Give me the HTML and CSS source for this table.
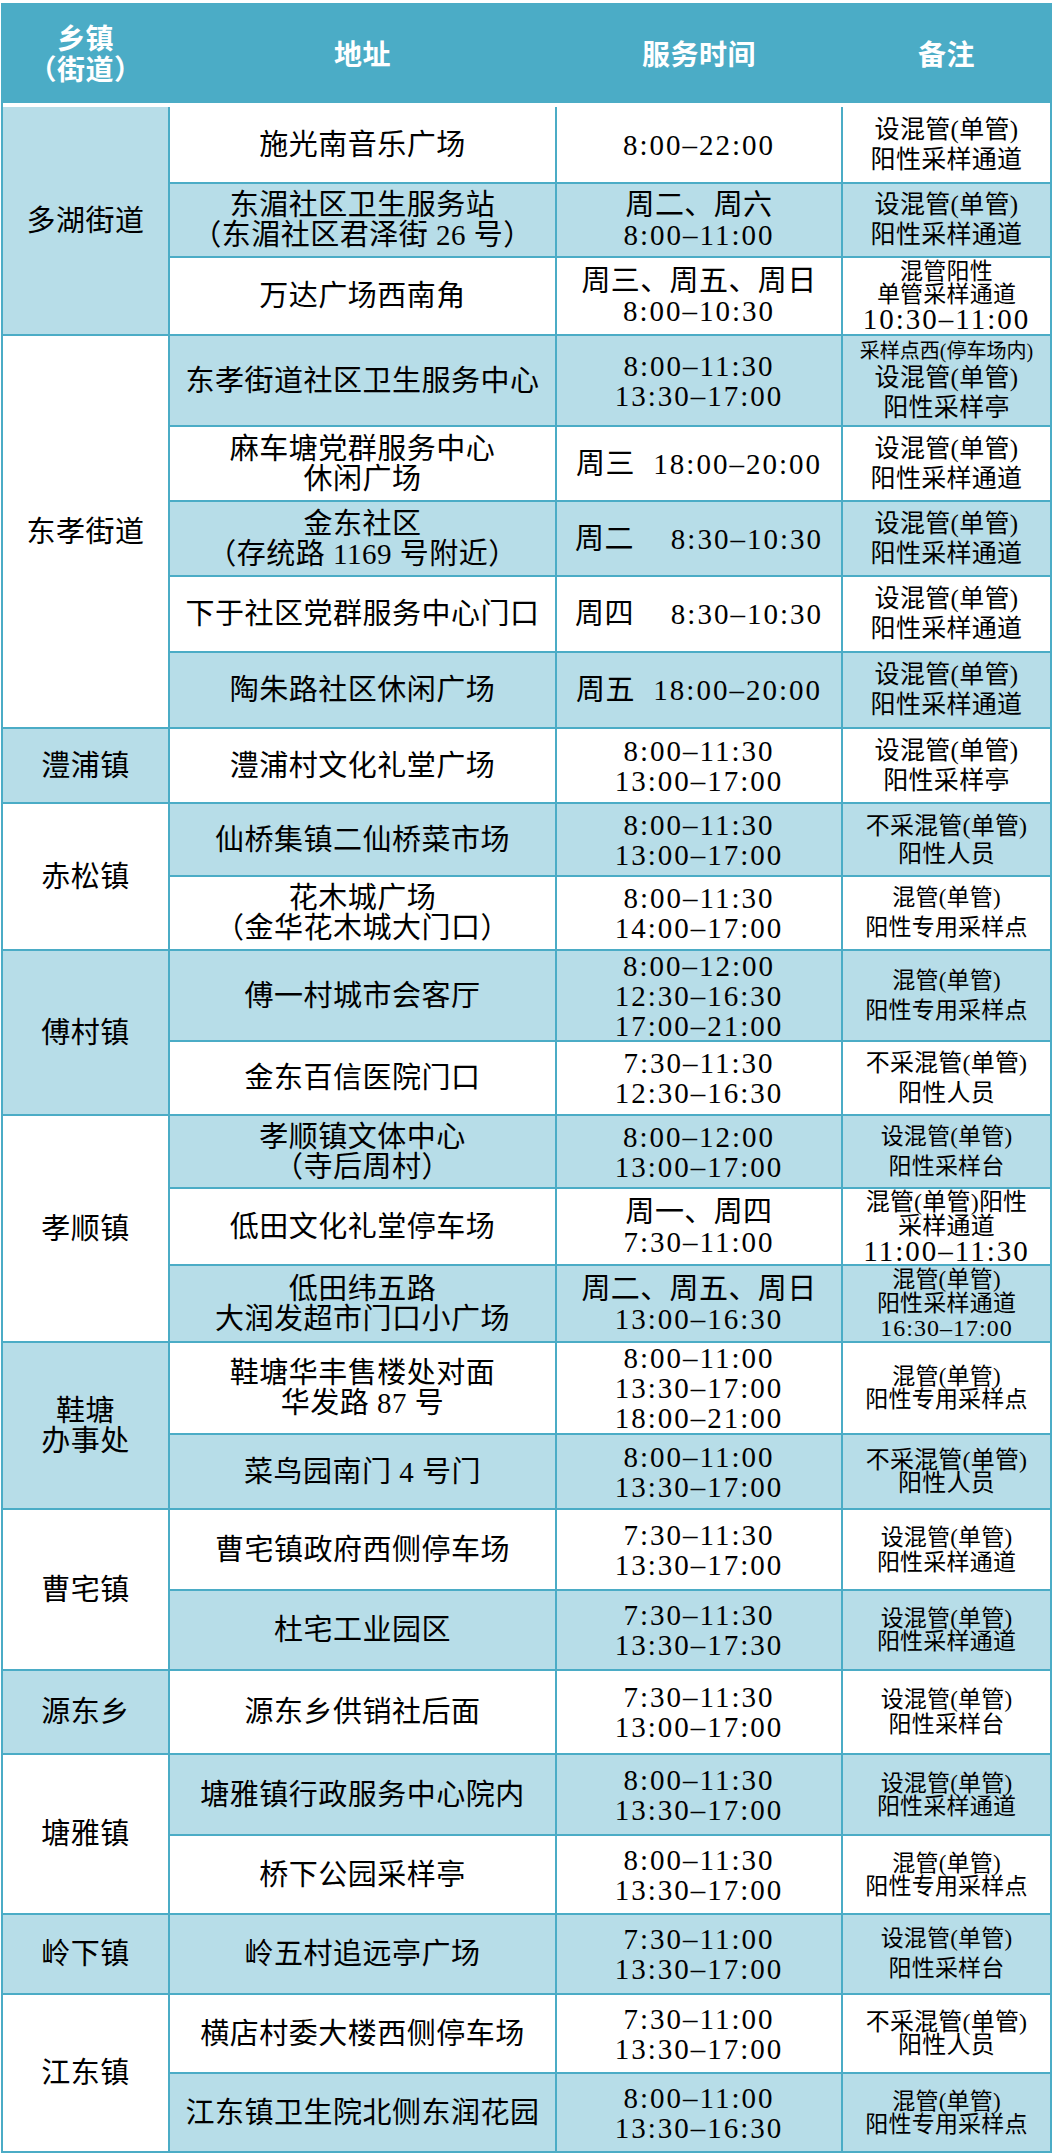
FILE: index.html
```html
<!DOCTYPE html>
<html lang="zh-CN">
<head>
<meta charset="utf-8">
<title>核酸采样点</title>
<link rel="stylesheet" href="styles.css">
</head>
<body>
<div class="sheet">
  <div class="cols head">
    <div class="hc"><div>乡镇<br>（街道）</div></div>
    <div class="hc"><div>地址</div></div>
    <div class="hc"><div>服务时间</div></div>
    <div class="hc"><div>备注</div></div>
  </div>
  <div class="spacer"></div>
  <div class="cols grid">
    <!-- 1 -->
    <div class="cell town b s3"><div>多湖街道</div></div>
    <div class="cell addr w"><div>施光南音乐广场</div></div>
    <div class="cell time w"><div><span class="hm">8:00–22:00</span></div></div>
    <div class="cell note big w"><div>设混管(单管)<br>阳性采样通道</div></div>
    <!-- 2 -->
    <div class="cell addr b"><div>东湄社区卫生服务站<br>（东湄社区君泽街 26 号）</div></div>
    <div class="cell time b"><div>周二、周六<br><span class="hm">8:00–11:00</span></div></div>
    <div class="cell note big b"><div>设混管(单管)<br>阳性采样通道</div></div>
    <!-- 3 -->
    <div class="cell addr w"><div>万达广场西南角</div></div>
    <div class="cell time w"><div>周三、周五、周日<br><span class="hm">8:00–10:30</span></div></div>
    <div class="cell note l23 w"><div>混管阳性<br>单管采样通道<span class="hm line">10:30–11:00</span></div></div>
    <!-- 4 -->
    <div class="cell town w s5"><div>东孝街道</div></div>
    <div class="cell addr b"><div>东孝街道社区卫生服务中心</div></div>
    <div class="cell time b"><div><span class="hm">8:00–11:30</span><br><span class="hm">13:30–17:00</span></div></div>
    <div class="cell note big b"><div><span class="tiny">采样点西(停车场内)</span>设混管(单管)<br>阳性采样亭</div></div>
    <!-- 5 -->
    <div class="cell addr w"><div>麻车塘党群服务中心<br>休闲广场</div></div>
    <div class="cell time w"><div>周三<span class="hm">&nbsp;&nbsp;18:00–20:00</span></div></div>
    <div class="cell note big w"><div>设混管(单管)<br>阳性采样通道</div></div>
    <!-- 6 -->
    <div class="cell addr b"><div>金东社区<br>（存统路 1169 号附近）</div></div>
    <div class="cell time b"><div>周二<span class="hm">&nbsp;&nbsp;&nbsp;&nbsp;8:30–10:30</span></div></div>
    <div class="cell note big b"><div>设混管(单管)<br>阳性采样通道</div></div>
    <!-- 7 -->
    <div class="cell addr w"><div>下于社区党群服务中心门口</div></div>
    <div class="cell time w"><div>周四<span class="hm">&nbsp;&nbsp;&nbsp;&nbsp;8:30–10:30</span></div></div>
    <div class="cell note big w"><div>设混管(单管)<br>阳性采样通道</div></div>
    <!-- 8 -->
    <div class="cell addr b"><div>陶朱路社区休闲广场</div></div>
    <div class="cell time b"><div>周五<span class="hm">&nbsp;&nbsp;18:00–20:00</span></div></div>
    <div class="cell note big b"><div>设混管(单管)<br>阳性采样通道</div></div>
    <!-- 9 -->
    <div class="cell town b"><div>澧浦镇</div></div>
    <div class="cell addr w"><div>澧浦村文化礼堂广场</div></div>
    <div class="cell time w"><div><span class="hm">8:00–11:30</span><br><span class="hm">13:00–17:00</span></div></div>
    <div class="cell note big w"><div>设混管(单管)<br>阳性采样亭</div></div>
    <!-- 10 -->
    <div class="cell town w s2"><div>赤松镇</div></div>
    <div class="cell addr b"><div>仙桥集镇二仙桥菜市场</div></div>
    <div class="cell time b"><div><span class="hm">8:00–11:30</span><br><span class="hm">13:00–17:00</span></div></div>
    <div class="cell note f24 l28 b"><div>不采混管(单管)<br>阳性人员</div></div>
    <!-- 11 -->
    <div class="cell addr w"><div>花木城广场<br>（金华花木城大门口）</div></div>
    <div class="cell time w"><div><span class="hm">8:00–11:30</span><br><span class="hm">14:00–17:00</span></div></div>
    <div class="cell note l30 w"><div>混管(单管)<br>阳性专用采样点</div></div>
    <!-- 12 -->
    <div class="cell town b s2"><div>傅村镇</div></div>
    <div class="cell addr b"><div>傅一村城市会客厅</div></div>
    <div class="cell time b"><div><span class="hm">8:00–12:00</span><br><span class="hm">12:30–16:30</span><br><span class="hm">17:00–21:00</span></div></div>
    <div class="cell note l30 b"><div>混管(单管)<br>阳性专用采样点</div></div>
    <!-- 13 -->
    <div class="cell addr w"><div>金东百信医院门口</div></div>
    <div class="cell time w"><div><span class="hm">7:30–11:30</span><br><span class="hm">12:30–16:30</span></div></div>
    <div class="cell note f24 l30 w"><div>不采混管(单管)<br>阳性人员</div></div>
    <!-- 14 -->
    <div class="cell town w s3"><div>孝顺镇</div></div>
    <div class="cell addr b"><div>孝顺镇文体中心<br>（寺后周村）</div></div>
    <div class="cell time b"><div><span class="hm">8:00–12:00</span><br><span class="hm">13:00–17:00</span></div></div>
    <div class="cell note l30 b"><div>设混管(单管)<br>阳性采样台</div></div>
    <!-- 15 -->
    <div class="cell addr w"><div>低田文化礼堂停车场</div></div>
    <div class="cell time w"><div>周一、周四<br><span class="hm">7:30–11:00</span></div></div>
    <div class="cell note f24 l24 w"><div>混管(单管)阳性<br>采样通道<span class="hm line">11:00–11:30</span></div></div>
    <!-- 16 -->
    <div class="cell addr b"><div>低田纬五路<br>大润发超市门口小广场</div></div>
    <div class="cell time b"><div>周二、周五、周日<br><span class="hm">13:00–16:30</span></div></div>
    <div class="cell note l24 b"><div>混管(单管)<br>阳性采样通道<span class="hm line sm">16:30–17:00</span></div></div>
    <!-- 17 -->
    <div class="cell town b s2"><div>鞋塘<br>办事处</div></div>
    <div class="cell addr w"><div>鞋塘华丰售楼处对面<br>华发路 87 号</div></div>
    <div class="cell time w"><div><span class="hm">8:00–11:00</span><br><span class="hm">13:30–17:00</span><br><span class="hm">18:00–21:00</span></div></div>
    <div class="cell note l23 w"><div>混管(单管)<br>阳性专用采样点</div></div>
    <!-- 18 -->
    <div class="cell addr b"><div>菜鸟园南门 4 号门</div></div>
    <div class="cell time b"><div><span class="hm">8:00–11:00</span><br><span class="hm">13:30–17:00</span></div></div>
    <div class="cell note f24 l23 b"><div>不采混管(单管)<br>阳性人员</div></div>
    <!-- 19 -->
    <div class="cell town w s2"><div>曹宅镇</div></div>
    <div class="cell addr w"><div>曹宅镇政府西侧停车场</div></div>
    <div class="cell time w"><div><span class="hm">7:30–11:30</span><br><span class="hm">13:30–17:00</span></div></div>
    <div class="cell note w"><div>设混管(单管)<br>阳性采样通道</div></div>
    <!-- 20 -->
    <div class="cell addr b"><div>杜宅工业园区</div></div>
    <div class="cell time b"><div><span class="hm">7:30–11:30</span><br><span class="hm">13:30–17:30</span></div></div>
    <div class="cell note l23 b"><div>设混管(单管)<br>阳性采样通道</div></div>
    <!-- 21 -->
    <div class="cell town b"><div>源东乡</div></div>
    <div class="cell addr w"><div>源东乡供销社后面</div></div>
    <div class="cell time w"><div><span class="hm">7:30–11:30</span><br><span class="hm">13:00–17:00</span></div></div>
    <div class="cell note w"><div>设混管(单管)<br>阳性采样台</div></div>
    <!-- 22 -->
    <div class="cell town w s2"><div>塘雅镇</div></div>
    <div class="cell addr b"><div>塘雅镇行政服务中心院内</div></div>
    <div class="cell time b"><div><span class="hm">8:00–11:30</span><br><span class="hm">13:30–17:00</span></div></div>
    <div class="cell note l23 b"><div>设混管(单管)<br>阳性采样通道</div></div>
    <!-- 23 -->
    <div class="cell addr w"><div>桥下公园采样亭</div></div>
    <div class="cell time w"><div><span class="hm">8:00–11:30</span><br><span class="hm">13:30–17:00</span></div></div>
    <div class="cell note l23 w"><div>混管(单管)<br>阳性专用采样点</div></div>
    <!-- 24 -->
    <div class="cell town b"><div>岭下镇</div></div>
    <div class="cell addr b"><div>岭五村追远亭广场</div></div>
    <div class="cell time b"><div><span class="hm">7:30–11:00</span><br><span class="hm">13:30–17:00</span></div></div>
    <div class="cell note l30 b"><div>设混管(单管)<br>阳性采样台</div></div>
    <!-- 25 -->
    <div class="cell town w s2"><div>江东镇</div></div>
    <div class="cell addr w"><div>横店村委大楼西侧停车场</div></div>
    <div class="cell time w"><div><span class="hm">7:30–11:00</span><br><span class="hm">13:30–17:00</span></div></div>
    <div class="cell note f24 l23 w"><div>不采混管(单管)<br>阳性人员</div></div>
    <!-- 26 -->
    <div class="cell addr b"><div>江东镇卫生院北侧东润花园</div></div>
    <div class="cell time b"><div><span class="hm">8:00–11:00</span><br><span class="hm">13:30–16:30</span></div></div>
    <div class="cell note l23 b"><div>混管(单管)<br>阳性专用采样点</div></div>
  </div>
</div>
</body>
</html>
```
FILE: styles.css
```css
html, body {
  margin: 0;
  padding: 0;
  background: #ffffff;
}

.sheet {
  width: 1051px;
  margin: 3px 0 0 1px;
  box-sizing: border-box;
  border: 2px solid #4bacc6;
  border-top: 0;
}

.cols {
  display: grid;
  grid-template-columns: 165px 385px 284px 207px;
  column-gap: 2px;
}

.head {
  height: 100px;
  background: #4bacc6;
}

.hc {
  display: flex;
  align-items: center;
  justify-content: center;
  text-align: center;
  color: #ffffff;
  font-family: "Noto Sans CJK SC", sans-serif;
  font-weight: 700;
  font-size: 28px;
  line-height: 31px;
  letter-spacing: 0.5px;
}

.spacer {
  height: 4px;
  background: #ffffff;
}

.grid {
  row-gap: 2px;
  background: #4bacc6;
  grid-template-rows:
    75px 72px 76px 89px 73px 73px 74px 74px 73px 71px 72px 89px 72px
    71px 75px 75px 90px 73px 79px 78px 82px 79px 77px 78px 77px 77px;
}

.cell {
  display: flex;
  align-items: center;
  justify-content: center;
  text-align: center;
  color: #000000;
  font-family: "Liberation Serif", "Noto Sans CJK SC", serif;
  min-width: 0;
}

.w { background: #ffffff; }
.b { background: #b7dde8; }

.town {
  grid-column: 1;
  font-size: 29px;
  line-height: 30px;
  letter-spacing: 0.5px;
}
.s2 { grid-row: span 2; }
.s3 { grid-row: span 3; }
.s5 { grid-row: span 5; }

.addr {
  grid-column: 2;
  font-size: 29px;
  line-height: 30px;
  letter-spacing: 0.5px;
}

.time {
  grid-column: 3;
  font-size: 29px;
  line-height: 30px;
  letter-spacing: 0.4px;
  white-space: nowrap;
}

.hm {
  font-family: "Liberation Serif", serif;
  font-size: 29px;
  letter-spacing: 2px;
}

.note {
  grid-column: 4;
  font-size: 23px;
  line-height: 25px;
  letter-spacing: 0.2px;
  white-space: nowrap;
}
.note.big {
  font-size: 25px;
  line-height: 30px;
  letter-spacing: 0.3px;
}
.note.f24 { font-size: 24px; }
.note.l23 { line-height: 23px; }
.note.l24 { line-height: 24px; }
.note.l28 { line-height: 28px; }
.note.l30 { line-height: 30px; }

.note .line {
  display: block;
  line-height: 26px;
}
.note .hm.sm {
  font-size: 24px;
  letter-spacing: 1px;
  line-height: 24px;
}

.tiny {
  display: block;
  font-size: 20px;
  line-height: 24px;
  letter-spacing: 0;
}
```
